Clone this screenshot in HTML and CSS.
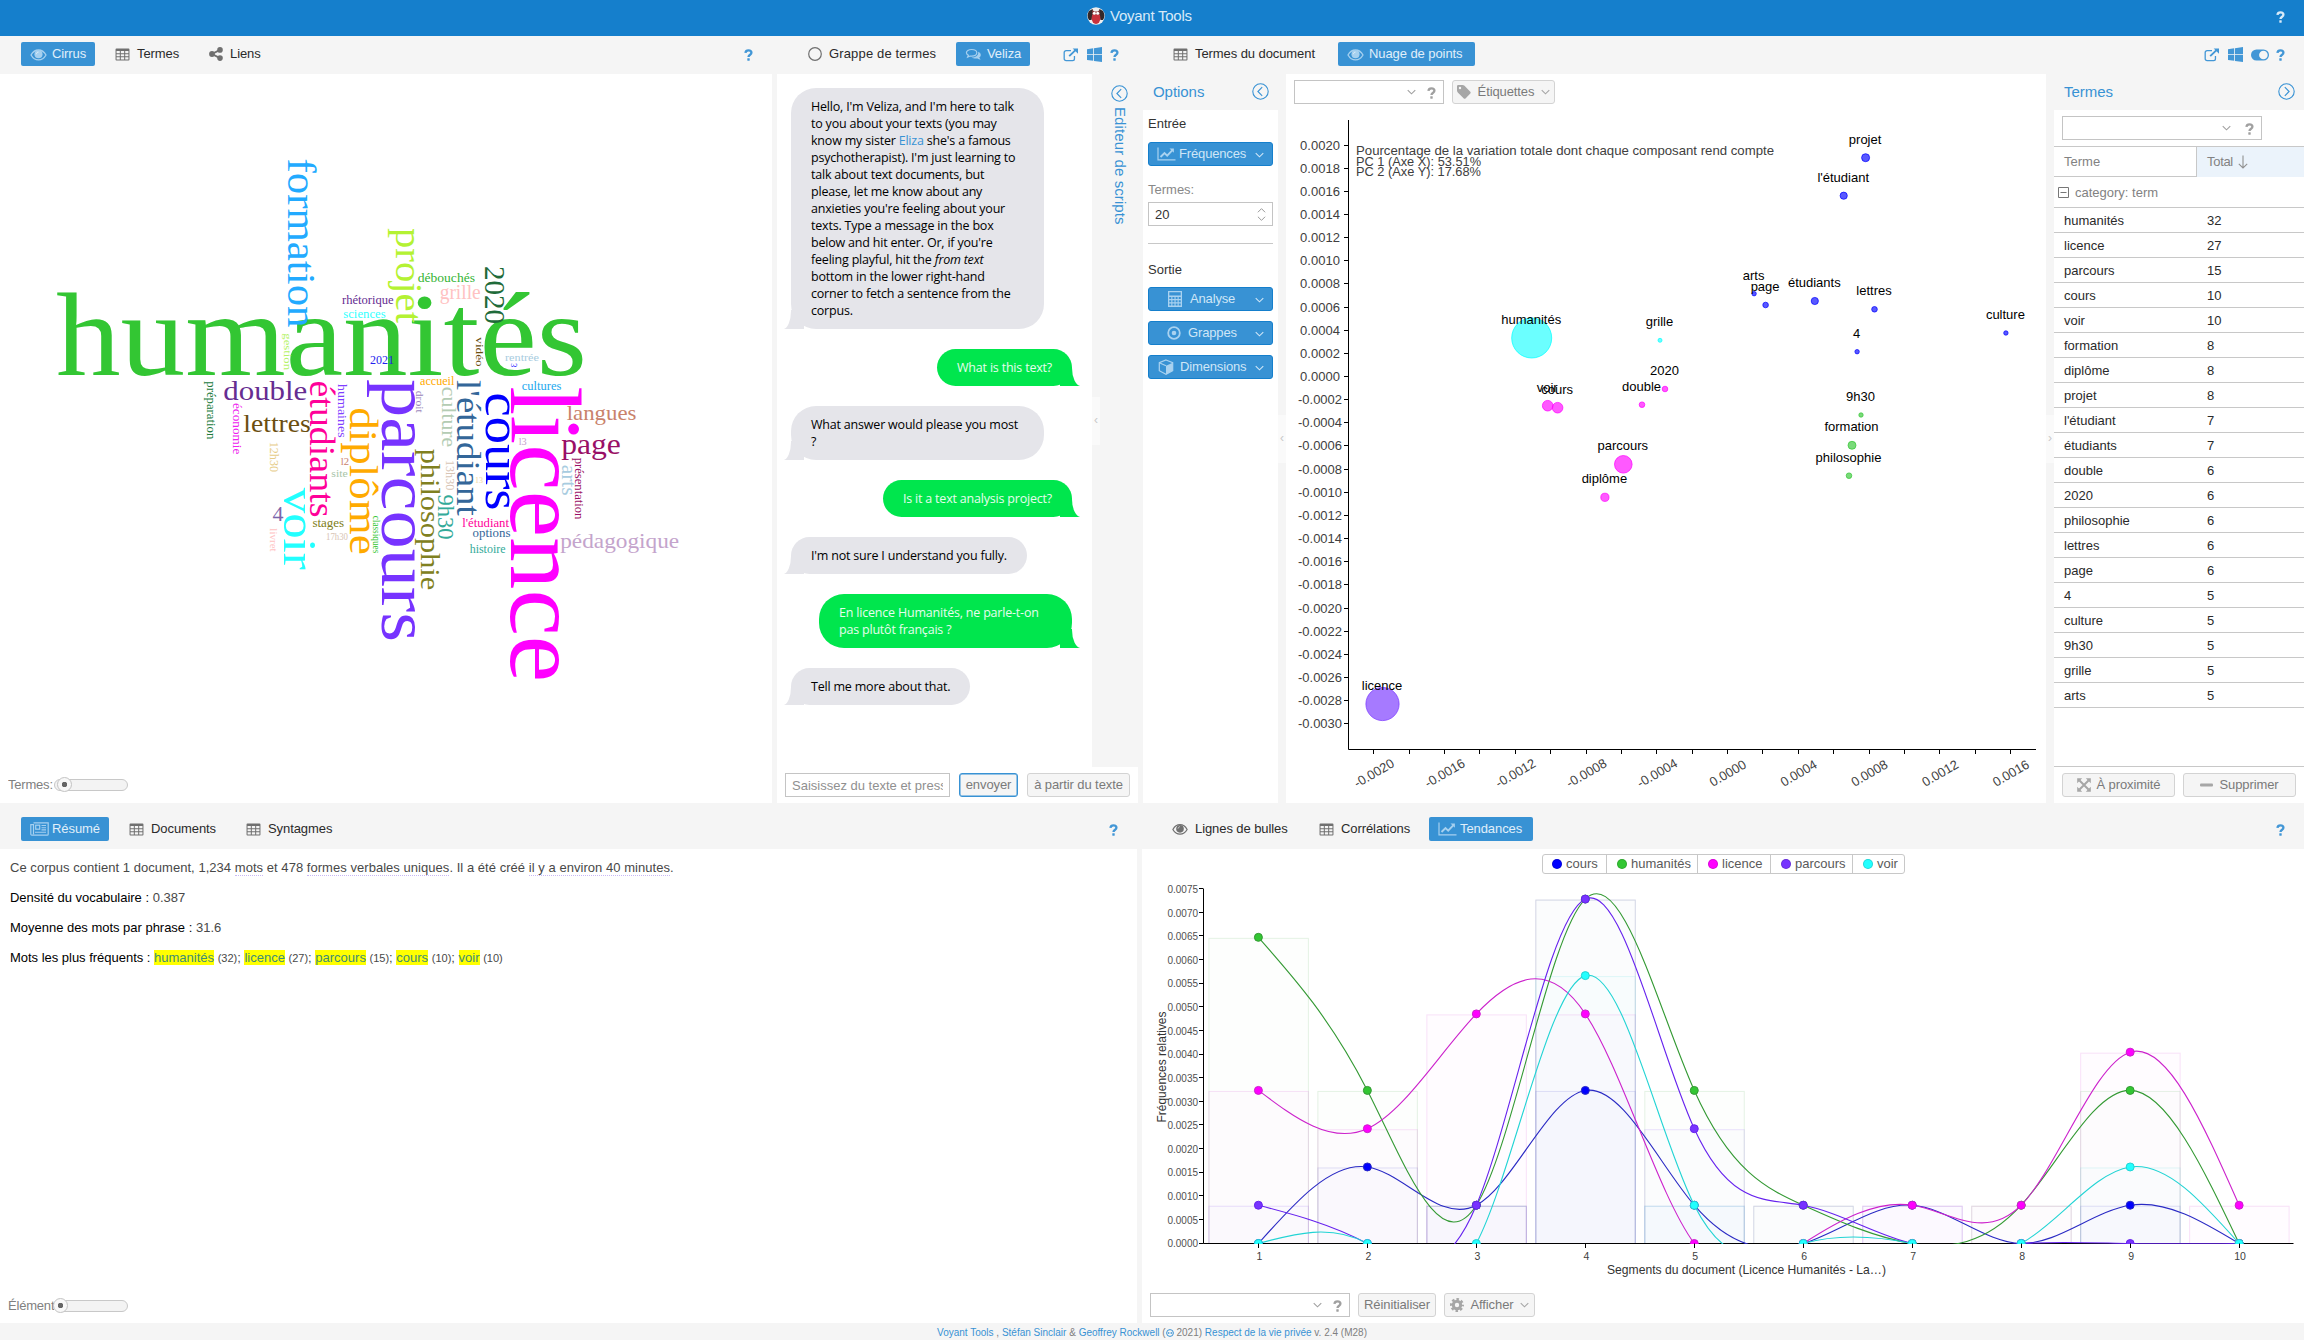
FILE: index.html
```html
<!DOCTYPE html>
<html lang="fr">
<head>
<meta charset="utf-8">
<title>Voyant Tools</title>
<link rel="stylesheet" href="styles.css">
</head>
<body>
<svg class="defs" width="0" height="0">
  <symbol id="i-help" viewBox="0 0 10 14"><path d="M1.4 4.6C1.7 2.6 3 1.7 4.9 1.7c2 0 3.5 1 3.5 2.8C8.4 6.8 5 6.6 5 9.4" fill="none" stroke="currentColor" stroke-width="2.7"/><rect x="3.6" y="10.8" width="2.8" height="2.8" rx=".4" fill="currentColor"/></symbol>
  <symbol id="i-eye" viewBox="0 0 18 16"><path d="M1 8.5C3 5 6 3.2 9 3.2s6 1.800 8 5.300c-2 3.500-5 5.300-8 5.300S3 12 1 8.500z" fill="none" stroke="currentColor" stroke-width="1.400"/><circle cx="9" cy="7.800" r="4.300" fill="currentColor"/><path d="M6.800 7.600c0-1.300 1-2.200 2.200-2.200" fill="none" stroke="#fff" stroke-opacity=".7" stroke-width=".9"/></symbol>
  <symbol id="i-table" viewBox="0 0 16 14"><path fill-rule="evenodd" fill="currentColor" d="M1.500.5h13a1 1 0 0 1 1 1v11a1 1 0 0 1-1 1h-13a1 1 0 0 1-1-1v-11a1 1 0 0 1 1-1zM1.600 3.200v2.400h3.500V3.200zm4.600 0v2.400h3.600V3.200zm4.700 0v2.400h3.500V3.200zM1.600 6.600V9h3.500V6.600zm4.600 0V9h3.600V6.600zm4.700 0V9h3.500V6.600zM1.600 10v2.400h3.500V10zm4.600 0v2.400h3.600V10zm4.700 0v2.400h3.500V10z"/></symbol>
  <symbol id="i-share" viewBox="0 0 14 14"><g fill="currentColor"><circle cx="3" cy="7" r="2.900"/><circle cx="11" cy="2.900" r="2.800"/><circle cx="11" cy="11.100" r="2.800"/></g><path d="M11 2.900L3 7l8 4.100" fill="none" stroke="currentColor" stroke-width="1.800"/></symbol>
  <symbol id="i-ring" viewBox="0 0 14 14"><circle cx="7" cy="7" r="6.300" fill="none" stroke="currentColor" stroke-width="1.200"/></symbol>
  <symbol id="i-comments" viewBox="0 0 18 14"><path d="M7 1.700c3.300 0 5.500 1.500 5.500 3.500S10.300 8.700 7 8.700c-.5 0-1-.05-1.500-.1L2.800 9.800l.8-2C2.200 7.100 1.500 6.200 1.500 5.200 1.500 3.200 3.700 1.700 7 1.700z" fill="none" stroke="currentColor" stroke-width="1.300"/><path d="M13.800 4.200c1.700.6 2.900 1.800 2.900 3.300 0 1-.6 2-1.600 2.700.3.800.8 1.400 1.500 2-.1.300-2.100-.1-3.300-1-2.400.4-4.900 0-6.300-1 4 0 7-2 7-5.100z" fill="currentColor"/></symbol>
  <symbol id="i-ext" viewBox="0 0 17 15"><path d="M12.200 8.500v3a2 2 0 0 1-2 2H3.200a2 2 0 0 1-2-2V4.900a2 2 0 0 1 2-2h5.300" fill="none" stroke="currentColor" stroke-width="1.400"/><path d="M6.600 8.700l7-6.700" stroke="currentColor" stroke-width="2"/><path d="M10.300.6H16v5.500z" fill="currentColor"/></symbol>
  <symbol id="i-win" viewBox="0 0 15 15"><path fill="currentColor" d="M0 2.200l6.200-.9v5.900H0zM7 1.200L15 0v7.200H7zM0 8h6.200v5.800L0 12.900zM7 8h8v7l-8-1.100z"/></symbol>
  <symbol id="i-toggle" viewBox="0 0 18 12"><rect y=".5" width="18" height="11" rx="5.500" fill="currentColor"/><circle cx="12.400" cy="6" r="4.300" fill="#f5f5f5"/></symbol>
  <symbol id="i-chart" viewBox="0 0 19 14"><path d="M1 .5v12.300h17.500" fill="none" stroke="currentColor" stroke-width="1.200"/><path d="M3.500 10l4-4 2.700 2.600 5-5.200" fill="none" stroke="currentColor" stroke-width="1.900"/><path d="M12.500 1.400h4.400v4.400z" fill="currentColor"/></symbol>
  <symbol id="i-calc" viewBox="0 0 16 16"><path fill-rule="evenodd" fill="currentColor" d="M1 0h14v16H1zM2.300 1.300v3.200h11.400V1.300zM2.300 6v1.900h2V6zm3.100 0v1.900h2.100V6zm3.200 0v1.900h2V6zm3.100 0v1.900h2V6zM2.300 9.200v2h2v-2zm3.100 0v2h2.100v-2zm3.200 0v2h2v-2zm3.100 0v2h2v-2zM2.300 12.500v2h2v-2zm3.100 0v2h2.100v-2zm3.200 0v2h2v-2zm3.100 0v2h2v-2z"/></symbol>
  <symbol id="i-bull" viewBox="0 0 14 14"><circle cx="7" cy="7" r="5.800" fill="none" stroke="currentColor" stroke-width="1.800"/><circle cx="7" cy="7" r="2.300" fill="currentColor"/></symbol>
  <symbol id="i-cube" viewBox="0 0 16 16"><path d="M8 1l6.700 2.700v8L8 15.200l-6.700-3.500v-8z" fill="none" stroke="currentColor" stroke-width="1.200"/><path d="M8 6.800l6.700-3v8L8 15.200z" fill="currentColor"/><path d="M1.300 3.800l6.700 3" stroke="currentColor" stroke-width="1.200"/></symbol>
  <symbol id="i-tag" viewBox="0 0 14 14"><path fill-rule="evenodd" fill="currentColor" d="M0 1.200A1.200 1.200 0 0 1 1.200 0h4.300c.7 0 1.500.3 2 .8l5.800 5.900c.5.500.5 1.200 0 1.700l-4.800 5c-.5.500-1.200.5-1.700 0L.8 7.500C.3 7 0 6.200 0 5.500zM3 1.800A1.200 1.200 0 1 0 3 4.200 1.200 1.200 0 0 0 3 1.800z"/></symbol>
  <symbol id="i-cog" viewBox="0 0 14 14"><circle cx="7" cy="7" r="3.700" fill="none" stroke="currentColor" stroke-width="3"/><circle cx="7" cy="7" r="5.800" fill="none" stroke="currentColor" stroke-width="2.400" stroke-dasharray="2.500 2.055" stroke-dashoffset="1.250"/></symbol>
  <symbol id="i-news" viewBox="0 0 19 14"><path d="M3.500.8h14.700v11.400a1 1 0 0 1-1 1H1.800a1 1 0 0 1-1-1V2.700h2.700v9.500" fill="none" stroke="currentColor" stroke-width="1.200"/><rect x="5.700" y="3.200" width="4" height="4" fill="none" stroke="currentColor" stroke-width="1.200"/><path d="M11.500 3.500H16M11.500 5.700H16M11.500 7.900H16M5 10.300h11" stroke="currentColor" stroke-width="1.100"/></symbol>
  <symbol id="i-arrows" viewBox="0 0 14 14"><path d="M2.500 2.500l9 9M11.500 2.500l-9 9" stroke="currentColor" stroke-width="2"/><path fill="currentColor" d="M.2.200h5L.2 5.200zM13.800.2v5l-5-5zM.2 13.800v-5l5 5zM13.800 13.800h-5l5-5z"/></symbol>
  <symbol id="i-minus" viewBox="0 0 13 4"><rect width="13" height="3.200" y=".4" rx="1" fill="currentColor"/></symbol>
  <symbol id="i-down" viewBox="0 0 10 6"><path d="M.8.8L5 5 9.200.8" fill="none" stroke="currentColor" stroke-width="1.200"/></symbol>
  <symbol id="i-left" viewBox="0 0 17 17"><circle cx="8.500" cy="8.500" r="7.700" fill="none" stroke="currentColor" stroke-width="1.100"/><path d="M10.200 4.200L5.900 8.500l4.300 4.300" fill="none" stroke="currentColor" stroke-width="1.100"/></symbol>
  <symbol id="i-right" viewBox="0 0 17 17"><circle cx="8.500" cy="8.500" r="7.700" fill="none" stroke="currentColor" stroke-width="1.100"/><path d="M6.800 4.200l4.300 4.300-4.300 4.300" fill="none" stroke="currentColor" stroke-width="1.100"/></symbol>
  <symbol id="i-spin" viewBox="0 0 10 16"><path d="M1 5.500l4-4 4 4M1 10.500l4 4 4-4" fill="none" stroke="currentColor" stroke-width="1.100"/></symbol>
</svg>

<div class="app">
  <header class="topbar">
    <div class="brand">
      <svg width="18" height="18" viewBox="0 0 18 18"><circle cx="9" cy="9" r="8.800" fill="#eee"/><path d="M2 4l3.500-2 1 3-2 8L2 13A8.500 8.500 0 0 1 2 4zM16 4l-3.500-2-1 3 2 8 2.500 0a8.500 8.500 0 0 0 0-9z" fill="#33282a"/><ellipse cx="9" cy="11" rx="4.400" ry="6" fill="#c8323c"/><path d="M5 3l2.500 1.500h3L13 3l-.5 4.500h-7z" fill="#8d3b3b"/><circle cx="7.300" cy="6.300" r="1.500" fill="#fff"/><circle cx="10.700" cy="6.300" r="1.500" fill="#fff"/></svg>
      <span>Voyant Tools</span>
    </div>
    <svg class="help"><use href="#i-help"/></svg>
  </header>

  <main class="upper">
    <section class="pane">
      <nav class="tabs">
        <a class="tab tab-on w74"><svg class="ic18"><use href="#i-eye"/></svg>Cirrus</a>
        <a class="tab w83"><svg class="ic15"><use href="#i-table"/></svg>Termes</a>
        <a class="tab w70"><svg class="ic14"><use href="#i-share"/></svg>Liens</a>
        <span class="tools"><svg class="help"><use href="#i-help"/></svg></span>
      </nav>
      <div class="body cirrus">
        <svg id="cloud" class="cloud" width="772" height="690" viewBox="0 74 772 690"></svg>
        <div class="slider"><span>Termes:</span><i class="track"><i class="knob knob-a"></i></i></div>
      </div>
    </section>

    <section class="pane">
      <nav class="tabs">
        <a class="tab w146"><svg class="ic14"><use href="#i-ring"/></svg>Grappe de termes</a>
        <a class="tab tab-on w74"><svg class="ic18"><use href="#i-comments"/></svg>Veliza</a>
        <span class="tools"><svg class="ext"><use href="#i-ext"/></svg><svg class="win"><use href="#i-win"/></svg><svg class="help"><use href="#i-help"/></svg></span>
      </nav>
      <div class="veliza">
        <div class="chatwrap">
          <div class="chat">
            <div class="msg bot">Hello, I'm Veliza, and I'm here to talk<br>to you about your texts (you may<br>know my sister <a>Eliza</a> she's a famous<br>psychotherapist). I'm just learning to<br>talk about text documents, but<br>please, let me know about any<br>anxieties you're feeling about your<br>texts. Type a message in the box<br>below and hit enter. Or, if you're<br>feeling playful, hit the <em>from text</em><br>bottom in the lower right-hand<br>corner to fetch a sentence from the<br>corpus.</div>
            <div class="msg me">What is this text?</div>
            <div class="msg bot wide">What answer would please you most<br>?</div>
            <div class="msg me">Is it a text analysis project?</div>
            <div class="msg bot">I'm not sure I understand you fully.</div>
            <div class="msg me wide">En licence Humanités, ne parle-t-on<br>pas plutôt français ?</div>
            <div class="msg bot">Tell me more about that.</div>
          </div>
          <div class="side">
            <div class="grip grip-a">‹</div>
            <div class="script"><svg class="circ"><use href="#i-left"/></svg><span>Editeur de scripts</span></div>
          </div>
        </div>
        <div class="ask">
          <div class="field ask-in"><span>Saisissez du texte et presse</span></div>
          <div class="btn focus">envoyer</div>
          <div class="btn w103">à partir du texte</div>
        </div>
      </div>
    </section>

    <section class="pane">
      <nav class="tabs">
        <a class="tab w163"><svg class="ic15"><use href="#i-table"/></svg>Termes du document</a>
        <a class="tab tab-on w137"><svg class="ic18"><use href="#i-eye"/></svg>Nuage de points</a>
        <span class="tools"><svg class="ext"><use href="#i-ext"/></svg><svg class="win"><use href="#i-win"/></svg><svg class="tog"><use href="#i-toggle"/></svg><svg class="help"><use href="#i-help"/></svg></span>
      </nav>
      <div class="scatterpane">
        <div class="options">
          <div class="phead"><span>Options</span><svg class="circ"><use href="#i-left"/></svg></div>
          <div class="optbody">
            <div class="lbl">Entrée</div>
            <div class="bbtn"><svg class="ic19"><use href="#i-chart"/></svg><span>Fréquences</span><svg class="dn"><use href="#i-down"/></svg></div>
            <div class="lbl grey">Termes:</div>
            <div class="field num"><span>20</span><svg class="spin"><use href="#i-spin"/></svg></div>
            <div class="rule"></div>
            <div class="lbl sortie">Sortie</div>
            <div class="bbtn b1"><svg class="ic16"><use href="#i-calc"/></svg><span>Analyse</span><svg class="dn"><use href="#i-down"/></svg></div>
            <div class="bbtn b2"><svg class="ic14"><use href="#i-bull"/></svg><span>Grappes</span><svg class="dn"><use href="#i-down"/></svg></div>
            <div class="bbtn b3"><svg class="ic16"><use href="#i-cube"/></svg><span>Dimensions</span><svg class="dn"><use href="#i-down"/></svg></div>
          </div>
        </div>
        <div class="split"><div class="grip grip-b">‹</div></div>
        <div class="scatter">
          <div class="bar">
            <div class="field combo w150"><svg class="dn"><use href="#i-down"/></svg><svg class="help"><use href="#i-help"/></svg></div>
            <div class="btn w103"><svg class="ic14"><use href="#i-tag"/></svg>Étiquettes<svg class="dn"><use href="#i-down"/></svg></div>
          </div>
          <svg id="scatter" width="760" height="697" viewBox="1286 106 760 697"></svg>
        </div>
        <div class="split"><div class="grip grip-b">›</div></div>
        <div class="terms">
          <div class="phead"><span>Termes</span><svg class="circ"><use href="#i-right"/></svg></div>
          <div class="termbody">
            <div class="tsearch"><div class="field combo w200"><svg class="dn"><use href="#i-down"/></svg><svg class="help"><use href="#i-help"/></svg></div></div>
            <div class="thead"><span>Terme</span><span class="sorted">Total <svg width="10" height="14" viewBox="0 0 10 14"><path d="M5 .5v12.500M.8 8.800L5 13l4.200-4.200" fill="none" stroke="#919191" stroke-width="1.100"/></svg></span></div>
            <div class="tcat"><svg width="11" height="11" viewBox="0 0 11 11"><path d="M.5.5h10v10H.5zM2.500 5.500h6" fill="none" stroke="#777"/></svg>category: term</div>
            <div id="rows"></div>
            <div class="tfoot"><div class="btn w113"><svg class="ic14"><use href="#i-arrows"/></svg>À proximité</div><div class="btn w113"><svg class="ic13"><use href="#i-minus"/></svg>Supprimer</div></div>
          </div>
        </div>
      </div>
    </section>
  </main>

  <main class="lower">
    <section class="pane">
      <nav class="tabs">
        <a class="tab tab-on w88"><svg class="ic19"><use href="#i-news"/></svg>Résumé</a>
        <a class="tab w106"><svg class="ic15"><use href="#i-table"/></svg>Documents</a>
        <a class="tab w106"><svg class="ic15"><use href="#i-table"/></svg>Syntagmes</a>
        <span class="tools"><svg class="help"><use href="#i-help"/></svg></span>
      </nav>
      <div class="body summary">
        <p>Ce corpus contient 1 document, 1,234 <u>mots</u> et 478 <u>formes verbales uniques</u>. Il a été créé <u>il y a environ 40 minutes</u>.</p>
        <p><b>Densité du vocabulaire :</b> 0.387</p>
        <p><b>Moyenne des mots par phrase :</b> 31.6</p>
        <p class="top"><b>Mots les plus fréquents :</b> <mark>humanités</mark> <small>(32)</small>; <mark>licence</mark> <small>(27)</small>; <mark>parcours</mark> <small>(15)</small>; <mark>cours</mark> <small>(10)</small>; <mark>voir</mark> <small>(10)</small></p>
        <div class="slider slider-b"><span>Éléments:</span><i class="track"><i class="knob knob-b"></i></i></div>
      </div>
    </section>
    <section class="pane">
      <nav class="tabs">
        <a class="tab w136"><svg class="ic16"><use href="#i-eye"/></svg>Lignes de bulles</a>
        <a class="tab w108"><svg class="ic15"><use href="#i-table"/></svg>Corrélations</a>
        <a class="tab tab-on w104"><svg class="ic19"><use href="#i-chart"/></svg>Tendances</a>
        <span class="tools"><svg class="help"><use href="#i-help"/></svg></span>
      </nav>
      <div class="body trends">
        <div class="legend" id="legend"></div>
        <svg id="trends" width="1162" height="408" viewBox="1142 874 1162 408"></svg>
        <div class="bar">
          <div class="field combo w200"><svg class="dn"><use href="#i-down"/></svg><svg class="help"><use href="#i-help"/></svg></div>
          <div class="btn w78">Réinitialiser</div>
          <div class="btn w91"><svg class="ic14"><use href="#i-cog"/></svg>Afficher<svg class="dn"><use href="#i-down"/></svg></div>
        </div>
      </div>
    </section>
  </main>

  <footer class="foot"><a>Voyant Tools</a> , <a>Stéfan Sinclair</a> &amp; <a>Geoffrey Rockwell</a> (<a><svg width="8" height="8" viewBox="0 0 8 8"><circle cx="4" cy="4" r="3.400" fill="none" stroke="#3892d4" stroke-width="1"/><path d="M1.900 4h1.500M4.600 4h1.500" stroke="#3892d4" stroke-width="1.500"/></svg></a> 2021) <a>Respect de la vie privée</a> v. 2.4 (M28)</footer>
</div>
<script src="app.js"></script>
</body>
</html>
```
FILE: styles.css
```css
* { box-sizing: border-box; }
body { margin: 0; font: 13px/17px "Liberation Sans", Arial, sans-serif; color: #484848; background: #f5f5f5; overflow: hidden; }
svg { display: block; flex: none; }
.defs { position: absolute; }
.app { width: 2304px; height: 1340px; display: grid; grid-template-rows: 36px 767px 520px 17px; }

.topbar { background: #157fcc; display: flex; align-items: center; justify-content: flex-end; padding-right: 19px; color: #d8eaf8; }
.brand { flex: 1; display: flex; align-items: center; gap: 5px; padding-left: 1087px; font-size: 15px; letter-spacing: -.25px; padding-bottom: 4px; }
.brand span { padding-bottom: 1px; }
.help { width: 9px; height: 12px; }
.topbar .help { margin-top: -3px; }

.upper { display: grid; grid-template-columns: 772px 361px 1161px; gap: 5px; }
.lower { display: grid; grid-template-columns: 1137px 1162px; gap: 5px; }
.pane { display: grid; grid-template-rows: 38px 1fr; min-width: 0; min-height: 0; }
.lower .pane { grid-template-rows: 46px 1fr; }
.body { background: #fff; min-height: 0; }

.tabs { display: flex; gap: 11px; padding: 6px 19px 8px 21px; }
.upper .pane + .pane .tabs { padding-left: 22px; }
.upper .pane + .pane + .pane .tabs { padding-left: 21px; }
.lower .tabs { padding-top: 14px; }
.tab { display: flex; align-items: center; gap: 7px; height: 24px; padding: 0 8px 1px 9px; white-space: nowrap; color: #2a2a2a; letter-spacing: -.08px; }
.w146 { letter-spacing: .15px; }
.tab svg { color: #707070; margin-top: 1px; }
.tab-on { background: #3892d4; color: #e0effa; border-radius: 2px; gap: 5px; }
.tab-on svg { color: #a6d0ef; }
.tab .ic19 { margin-right: -2px; }
.tools { margin-left: auto; display: flex; align-items: center; gap: 8px; height: 24px; color: #4397d6; padding-top: 1px; }
.ext { width: 16px; height: 14px; } .win { width: 15px; height: 15px; } .tog { width: 18px; height: 12px; margin-right: -1px; }
.ic13 { width: 13px; height: 4px; } .ic14 { width: 14px; height: 14px; } .ic15 { width: 15px; height: 13px; }
.ic16 { width: 16px; height: 16px; } .ic18 { width: 17px; height: 15px; } .ic19 { width: 19px; height: 14px; }
.circ { width: 17px; height: 17px; color: #3892d4; }
.dn { width: 9px; height: 6px; }
.w70 { width: 70px; } .w74 { width: 74px; } .w78 { width: 78px; } .w83 { width: 83px; } .w88 { width: 88px; } .w91 { width: 91px; }
.w103 { width: 103px; } .w104 { width: 104px; } .w106 { width: 106px; } .w108 { width: 108px; } .w113 { width: 113px; }
.w136 { width: 136px; } .w137 { width: 137px; } .w146 { width: 146px; } .w150 { width: 150px; } .w163 { width: 163px; } .w200 { width: 200px; }

.cirrus { display: flex; flex-direction: column; }
.cloud { font-family: "Palatino", "Palatino Linotype", "Liberation Serif", serif; }
.slider { display: flex; align-items: center; padding: 12px 0 0 8px; color: #808080; }
.slider span { width: 46px; overflow: hidden; letter-spacing: -.2px; white-space: nowrap; }
.track { width: 74px; height: 12px; border: 1px solid #c8c8c8; border-radius: 6px; background: #f3f3f3; display: flex; align-items: center; }
.knob { width: 15px; height: 15px; flex: none; border-radius: 50%; border: 1px solid #c3c3c3; background: radial-gradient(circle, #666 0 2.500px, #f8f8f8 3px); }
.knob-a { margin-left: 2px; } .knob-b { margin-left: -2px; }

.veliza { display: grid; grid-template-rows: 1fr 36px; min-height: 0; }
.chatwrap { display: grid; grid-template-columns: 315px 46px; min-height: 0; }
.chat { background: #fff; padding: 14px 20px 0 14px; display: flex; flex-direction: column; gap: 20px; font: 12.500px/17px "Open Sans", "Noto Sans", sans-serif; letter-spacing: -.2px; }
.msg { position: relative; padding: 10px 20px; border-radius: 24px; width: max-content; white-space: nowrap; color: #000; background: #e5e5ea; }
.msg:first-child, .wide { width: 253px; border-radius: 25px; }
.msg a { color: #3892d4; }
.me { align-self: flex-end; background: #00e64d; color: #e6fdee; }
.msg::before, .msg::after { content: ""; position: absolute; bottom: 0; height: 19px; }
.bot::before { left: -7px; width: 20px; background: #e5e5ea; }
.bot::after { left: -8px; width: 8px; background: #fff; border-bottom-right-radius: 8px 18px; }
.me::before { right: -8px; width: 20px; background: #00e64d; }
.me::after { right: -9px; width: 9px; background: #fff; border-bottom-left-radius: 9px 18px; }
.side { display: grid; grid-template-columns: 8px 1fr; }
.grip { background: #fafafa; color: #c8c8c8; height: 48px; width: 8px; text-align: center; line-height: 46px; font-size: 12px; }
.grip-a { margin-top: 323px; } .grip-b { margin-top: 341px; }
.script { display: flex; flex-direction: column; align-items: center; gap: 5px; padding-top: 11px; color: #3892d4; }
.script span { writing-mode: vertical-rl; font-size: 15px; letter-spacing: .1px; margin-left: 2px; }
.ask { background: #fff; display: flex; align-items: center; padding: 0 8px; gap: 9px; }
.field { height: 24px; border: 1px solid #c4c4c4; background: #fff; display: flex; align-items: center; }
.ask-in { width: 165px; padding: 0 6px; font-size: 13px; color: #909090; }
.ask-in span { overflow: hidden; white-space: nowrap; }
.btn { height: 24px; border: 1px solid #d3d3d3; border-radius: 3px; background: #f5f5f5; color: #7a7a7a; display: flex; align-items: center; justify-content: center; gap: 6px; white-space: nowrap; padding-bottom: 1px; letter-spacing: -.1px; }
.btn svg { color: #a6a6a6; margin-top: 1px; }
.focus { width: 59px; border: 1px solid #3892d4; box-shadow: inset 0 0 0 .5px #3892d4; }

.scatterpane { display: grid; grid-template-columns: 135px 8px 760px 8px 250px; min-height: 0; }
.phead { height: 36px; display: flex; align-items: center; justify-content: space-between; padding: 0 9.500px 2px 10px; font-size: 15px; color: #3892d4; letter-spacing: -.05px; }
.options, .terms { display: grid; grid-template-rows: 36px 1fr; min-height: 0; }
.optbody { background: #fff; padding: 5px; display: flex; flex-direction: column; }
.lbl { height: 17px; margin-bottom: 10px; color: #333; }
.grey { color: #888; margin: 15px 0 4px; }
.bbtn { height: 24px; flex: none; background: #3892d4; border: 1px solid #157fcc; border-radius: 3px; color: #cfe6f7; display: flex; align-items: center; padding: 0 8px 1px; gap: 3px; letter-spacing: -.15px; }
.bbtn svg { color: #a9d2f0; } .bbtn .dn { margin-left: auto; color: #cfe6f7; margin-top: 3px; }
.b1, .b2 { padding-left: 18px; gap: 7px; } .b2, .b3 { margin-top: 10px; } .b3 { padding-left: 9px; gap: 6px; }
.num { padding: 0 6px; justify-content: space-between; color: #333; } .spin { width: 9px; height: 15px; color: #999; }
.rule { height: 1px; background: #c8c8c8; margin: 17px 0 17px; }
.sortie { margin-bottom: 9px; }
.scatter { background: #fff; }
.bar { height: 32px; padding: 6px 8px 0; display: flex; gap: 8px; }
.combo { justify-content: flex-end; gap: 11px; padding: 0 7px 0 0; color: #a0a0a0; }
.combo .help { margin-top: 2px; }
.scatter .bar .btn { gap: 7px; }
.termbody { background: #fff; display: flex; flex-direction: column; }
.tsearch { padding: 6px 8px; } .tsearch .combo { gap: 14px; }
.thead { display: grid; grid-template-columns: 142px 1fr; height: 31px; border-top: 1px solid #c8c8c8; border-bottom: 1px solid #c8c8c8; line-height: 30px; color: #828282; font-size: 13px; }
.thead span { padding-left: 10px; } .thead .sorted { background: #ebf3fb; border-left: 1px solid #c8c8c8; display: flex; align-items: center; gap: 5px; letter-spacing: -.3px; }
.tcat { height: 31px; border-bottom: 1px solid #c8c8c8; display: flex; align-items: center; gap: 6px; padding-left: 4px; color: #828282; }
.row { display: grid; grid-template-columns: 143px 1fr; height: 25px; line-height: 25px; padding-left: 10px; border-bottom: 1px solid #c8c8c8; color: #2a2a2a; }
.tfoot { margin-top: auto; height: 37px; border-top: 1px solid #c8c8c8; padding: 6px 8px; display: flex; gap: 8px; }

.summary { display: flex; flex-direction: column; padding: 10px 0 0 10px; }
.summary p { margin: 0 0 13px; height: 17px; letter-spacing: .04px; }
.summary .top { letter-spacing: 0; }
.summary b { font-weight: 400; color: #000; letter-spacing: -.02px; }
.summary u { text-decoration: none; border-bottom: 1px dotted #c9b8f5; }
.summary mark { background: #ff0; color: #3d8c78; }
.summary small { font-size: 11px; }
.slider-b { margin: auto 0 9px; padding: 0; margin-left: -2px; }
.trends { display: flex; flex-direction: column; }
.legend { display: flex; height: 20px; width: 363px; margin: 5px 0 0 400px; border: 1px solid #c8c8c8; border-radius: 3px; }
.legend span { display: flex; align-items: center; gap: 4px; padding-left: 10px; border-left: 1px solid #c8c8c8; color: #5a5a5a; }
.legend span:first-child { border-left: 0; padding-left: 9px; }
.legend i { width: 10px; height: 10px; border-radius: 50%; border: 1px solid rgba(0,0,0,.15); }
.trends .bar { padding-top: 11px; height: 42px; }
.foot { text-align: center; font-size: 10px; line-height: 19px; color: #808080; }
.foot a { color: #3892d4; } .foot svg { display: inline; vertical-align: -1px; }
```
FILE: app.js
```js
const NS = 'http://www.w3.org/2000/svg';
function add(parent, tag, attrs, text) {
  const el = document.createElementNS(NS, tag);
  for (const k in attrs) el.setAttribute(k, attrs[k]);
  if (text !== undefined) el.textContent = text;
  parent.appendChild(el);
  return el;
}
function label(p, text, x, y, size, fill, len, anchor, extra) {
  const a = Object.assign({ x, y, 'font-size': size, fill }, extra || {});
  if (len) { a.textLength = len; a.lengthAdjust = 'spacingAndGlyphs'; }
  if (anchor) a['text-anchor'] = anchor;
  return add(p, 'text', a, text);
}

/* Word cloud: text, x, baseline, length, size, colour */
const across = [
  ['humanités', 56, 375.2, 531, 118, '#33c633'], ['débouchés', 417.7, 282, 57.3, 13, '#33b433'], ['grille', 439.7, 299.3, 41, 20, '#ffc2c2'],
  ['rhétorique', 342, 304, 51.7, 12, '#662d91'], ['sciences', 343.3, 318, 42.3, 12, '#33ffff'], ['2021', 370, 364, 24, 13, '#2222ee'],
  ['rentrée', 505, 360.7, 34, 11, '#a8cce0'], ['double', 223.3, 400, 84, 28, '#662d91'], ['lettres', 243.3, 431.7, 67.5, 26, '#6b4e10'],
  ['accueil', 420, 385, 34.3, 12, '#ffaa00'], ['cultures', 521.7, 390, 39.7, 12, '#22a8ee'], ['l3', 518.7, 444.7, 8, 11, '#c4a4cc'],
  ['l2', 340.7, 465.3, 8.3, 11, '#c9826b'], ['langues', 566.7, 419.7, 69.7, 22, '#c9826b'], ['page', 561.2, 454.3, 59.7, 29, '#990f66'],
  ['pédagogique', 560.2, 548, 119, 22, '#c4a4cc'], ['options', 472.6, 536.7, 37.8, 12, '#336699'], ["l'étudiant", 462.2, 526.7, 46.8, 12, '#ff0099'],
  ['histoire', 469.7, 552.7, 35.8, 12, '#33aa99'], ['stages', 312.4, 526.7, 31.8, 12, '#808020'], ['17h30', 326, 539.7, 21.9, 10, '#d8c4b4'],
  ['4', 272.6, 521, 11, 22, '#7a64aa'], ['site', 331.3, 476.7, 16.4, 11, '#a8c4a8'], ['13', 475, 483, 8, 9, '#f0d8a0']
];
/* Words turned a quarter clockwise: text, baseline x, start y, length, size, colour */
const down = [
  ['formation', 287.6, 158.5, 169, 39, '#22aaff'], ['projet', 395.5, 228, 95, 37, '#b4f233'], ['2020', 485, 266, 58, 29, '#1f6b3a'],
  ['gestion', 284, 333.3, 36.7, 11, '#b4f266'], ['vidéo', 475.7, 337.3, 29.3, 11, '#6b4e10'], ['préparation', 207, 381.3, 58, 12, '#207a3c'],
  ['économie', 233, 403, 51.3, 12, '#ee22ee'], ['étudiants', 310.4, 380.5, 137, 35, '#ff0099'], ['humaines', 337.8, 384, 53.7, 12, '#8040ff'],
  ['diplôme', 349.7, 407.3, 147.4, 41, '#ffaa00'], ['parcours', 381.6, 379, 263, 69, '#7733ff'], ['droit', 415.7, 390.7, 22, 11, '#9a86bb'],
  ['culture', 442.3, 386.8, 60.4, 20, '#b4ccb4'], ['13h30', 446.3, 460, 30.3, 13, '#d8c4b4'], ['philosophie', 421, 448.7, 141.500, 28, '#808020'],
  ['9h30', 437.8, 494.500, 45, 23, '#33aa99'], ["l'étudiant", 456.7, 380, 135.7, 33, '#336699'], ['cours', 486, 392.500, 118, 50, '#0000ff'],
  ['licence', 511.4, 386.2, 296, 102, '#ff00ff'], ['présentation', 575.2, 457.7, 61.7, 12, '#990f66'], ['arts', 561.7, 464.7, 31, 20, '#a8cce0'],
  ['12h30', 270.1, 441.7, 30.3, 13, '#e6cc88'], ['voir', 284, 487.7, 82, 46, '#22ffff'], ['livret', 270, 528.3, 23.4, 10, '#ffc2c2'],
  ['classiques', 373.2, 515.7, 37.6, 10, '#33c633'], ['3', 510.5, 363.3, 4, 8, '#0000ff']
];
const cloud = document.getElementById('cloud');
across.forEach(([t, x, y, len, s, c]) => label(cloud, t, x, y, s, c, len));
down.forEach(([t, x, y, len, s, c]) => label(cloud, t, 0, 0, s, c, len, null, { transform: `translate(${x} ${y}) rotate(90)` }));

/* Scatter plot */
const sc = document.getElementById('scatter');
add(sc, 'path', { d: 'M1348.5 120V749.5H2036', fill: 'none', stroke: '#000' });
for (let i = 0; i <= 25; i++) {
  const y = 145.5 + i * 23.15, v = (0.002 - i * 0.0002), t = Math.abs(v) < 1e-9 ? '0.0000' : v.toFixed(4);
  add(sc, 'path', { d: `M1344 ${Math.round(y) - .5}h4.500`, stroke: '#000' });
  label(sc, t, 1320, y + 4, 13, '#404040', v < -1e-6 ? 44 : 39.8, 'middle');
}
for (let i = 0; i <= 18; i++) {
  const x = 1373.3 + i * 35.38;
  add(sc, 'path', { d: `M${Math.round(x) + .5} 749.500v4.500`, stroke: '#000' });
  if (i % 2 === 0) {
    const v = -0.002 + i * 0.0002, t = Math.abs(v) < 1e-9 ? '0.0000' : v.toFixed(4);
    label(sc, t, 0, 0, 13, '#404040', v < -1e-6 ? 44 : 39.8, 'middle', { transform: `translate(${x + 3} 777) rotate(-30)` });
  }
}
label(sc, 'Pourcentage de la variation totale dont chaque composant rend compte', 1356, 155, 13, '#404040', 418);
label(sc, 'PC 1 (Axe X): 53.51%', 1356, 165.5, 13, '#404040', 125);
label(sc, 'PC 2 (Axe Y): 17.68%', 1356, 176, 13, '#404040', 125);
const B = '#0000ff', M = '#ff00ff', G = '#33c633', C = '#00ffff', V = '#7733ff';
[['projet', 1865.6, 157.7, 4, B], ["l'étudiant", 1843.7, 195.7, 3.6, B], ['arts', 1754.1, 293.7, 2.2, B], ['page', 1765.6, 305, 2.8, B],
 ['étudiants', 1814.8, 301, 3.6, B], ['lettres', 1874.5, 309.3, 2.8, B], ['culture', 2005.9, 333, 2.2, B], ['4', 1857.1, 351.7, 2.2, B],
 ['humanités', 1531.7, 338, 20, C], ['grille', 1660, 340.3, 2, C], ['2020', 1665, 389, 2.8, M], ['double', 1642, 404.7, 2.8, M],
 ['voir', 1547.7, 405.7, 5.3, M], ['cours', 1557.6, 407.7, 5.3, M], ['9h30', 1861, 415, 2.2, G], ['formation', 1852, 445.3, 4, G],
 ['philosophie', 1849, 475.7, 2.8, G], ['parcours', 1623.3, 464.3, 8.8, M], ['diplôme', 1604.9, 497.3, 4.100, M], ['licence', 1382.5, 704, 16.6, V]
].forEach(([t, x, y, r, c]) => {
  add(sc, 'circle', { cx: x, cy: y, r, fill: c, 'fill-opacity': c === C ? .58 : .65, stroke: c, 'stroke-opacity': .7 });
  label(sc, t, x - .5, y - 14, 13, '#000', 0, 'middle');
});

/* Term grid */
document.getElementById('rows').innerHTML = [['humanités', 32], ['licence', 27], ['parcours', 15], ['cours', 10], ['voir', 10], ['formation', 8],
  ['diplôme', 8], ['projet', 8], ["l'étudiant", 7], ['étudiants', 7], ['double', 6], ['2020', 6], ['philosophie', 6], ['lettres', 6],
  ['page', 6], ['4', 5], ['culture', 5], ['9h30', 5], ['grille', 5], ['arts', 5]]
  .map(([t, n]) => `<div class="row"><span>${t}</span><span>${n}</span></div>`).join('');

/* Trends: relative frequencies per segment, in units of one occurrence */
const series = [
  { name: 'cours', w: 63, color: '#0000ff', line: '#2a2ac4', n: [0, 2, 1, 4, 1, 0, 1, 0, 1, 0] },
  { name: 'humanités', w: 91, color: '#33c633', line: '#339933', n: [8, 4, 1, 9, 4, 1, 0, 1, 4, 0] },
  { name: 'licence', w: 73, color: '#ff00ff', line: '#cc22cc', n: [4, 3, 6, 6, 0, 0, 1, 1, 5, 1] },
  { name: 'parcours', w: 82, color: '#7733ff', line: '#6622ee', n: [1, 0, 1, 9, 3, 1, 0, 0, 0, 0] },
  { name: 'voir', w: 52, color: '#22ffff', line: '#22d4d4', n: [0, 0, 0, 7, 1, 0, 0, 0, 2, 0] }
];
document.getElementById('legend').innerHTML = series
  .map(s => `<span style="width:${s.w}px"><i style="background:${s.color}"></i>${s.name}</span>`).join('');
const tr = document.getElementById('trends');
const X = i => 1258.4 + i * 108.97, Y = n => 1243.5 - n * 38.27;
const clip = add(add(tr, 'defs', {}), 'clipPath', { id: 'plot' });
add(clip, 'rect', { x: 1203, y: 880, width: 1091, height: 364 });
const bars = add(tr, 'g', { 'clip-path': 'url(#plot)' });
add(tr, 'path', { d: 'M1203.500 889V1243.500H2293.500', fill: 'none', stroke: '#000' });
const lines = add(tr, 'g', { 'clip-path': 'url(#plot)' });
/* Second derivatives of the natural cubic spline through evenly spaced values */
function curvature(y) {
  const n = y.length, m = Array(n).fill(0), c = [0], d = [0];
  for (let i = 1; i < n - 1; i++) {
    const den = 4 - c[i - 1];
    c[i] = 1 / den;
    d[i] = (6 * (y[i + 1] - 2 * y[i] + y[i - 1]) - d[i - 1]) / den;
  }
  for (let i = n - 2; i > 0; i--) m[i] = d[i] - c[i] * m[i + 1];
  return m;
}
series.forEach(s => {
  const y = s.n.map(Y), m = curvature(y);
  let d = `M${X(0)} ${y[0]}`;
  for (let i = 0; i < 9; i++) {
    const k = y[i + 1] - y[i], a = k - (2 * m[i] + m[i + 1]) / 6, b = k + (m[i] + 2 * m[i + 1]) / 6;
    d += `C${X(i + 1 / 3)} ${y[i] + a / 3} ${X(i + 2 / 3)} ${y[i + 1] - b / 3} ${X(i + 1)} ${y[i + 1]}`;
  }
  s.n.forEach((n, i) => {
    if (n) add(bars, 'rect', { x: X(i) - 49.500, y: y[i] + 1, width: 99.500, height: 1244 - y[i], fill: s.color, 'fill-opacity': .012, stroke: s.line, 'stroke-opacity': .13 });
  });
  add(lines, 'path', { d, fill: 'none', stroke: s.line, 'stroke-width': 1.1 });
});
series.forEach(s => s.n.forEach((n, i) => add(lines, 'circle', { cx: X(i), cy: Y(n), r: 4, fill: s.color, stroke: s.line })));
for (let i = 0; i <= 15; i++) {
  const y = 1243.500 - i * 23.62;
  add(tr, 'path', { d: `M1199 ${Math.round(y) - .500}h4.500`, stroke: '#000' });
  label(tr, (i * .0005).toFixed(4), 1198, y + 3.800, 10, '#505050', 30.500, 'end');
}
for (let i = 0; i < 10; i++) {
  add(tr, 'path', { d: `M${Math.round(X(i)) + .5} 1243.500v4.500`, stroke: '#000' });
  label(tr, i + 1, X(i) + 1, 1259.500, 10.500, '#404040', 0, 'middle');
}
label(tr, 'Segments du document (Licence Humanités - La…)', 1607, 1274, 13, '#333', 279);
label(tr, 'Fréquences relatives', 0, 0, 13, '#333', 111, null, { transform: 'translate(1166 1122.500) rotate(-90)' });
```
